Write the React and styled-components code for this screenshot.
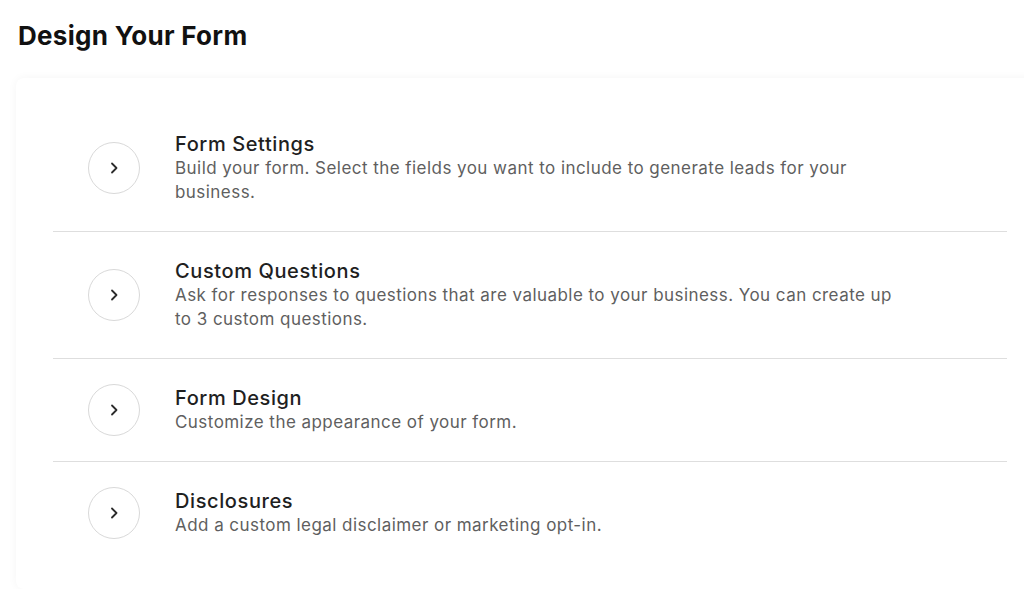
import React from "react";
import styled, { createGlobalStyle } from "styled-components";

const GlobalStyle = createGlobalStyle`
    body {
        margin: 0;
        background: #ffffff;
        font-family: Inter, "Liberation Sans", sans-serif;
        overflow: hidden;
    }
`;

const sections = [
    {
        title: "Form Settings",
        text: "Build your form. Select the fields you want to include to generate leads for your business.",
    },
    {
        title: "Custom Questions",
        text: "Ask for responses to questions that are valuable to your business. You can create up to 3 custom questions.",
    },
    {
        title: "Form Design",
        text: "Customize the appearance of your form.",
    },
    {
        title: "Disclosures",
        text: "Add a custom legal disclaimer or marketing opt-in.",
    },
];

const App = () => {
    return (
        <Page>
            <GlobalStyle />
            <Heading>Design Your Form</Heading>
            <Card>
                {sections.map((s, i) => (
                    <Row key={s.title} last={i === sections.length - 1}>
                        <CircleButton aria-label={s.title}>
                            <svg width="14" height="14" viewBox="0 0 14 14" fill="none">
                                <path
                                    d="M5 2.5 L9.5 7 L5 11.5"
                                    stroke="#2b2b2b"
                                    strokeWidth="1.8"
                                    strokeLinecap="round"
                                    strokeLinejoin="round"
                                />
                            </svg>
                        </CircleButton>
                        <Text>
                            <h3>{s.title}</h3>
                            <p>{s.text}</p>
                        </Text>
                    </Row>
                ))}
            </Card>
        </Page>
    );
};

const Page = styled.div`
    padding: 20px 0 0 16px;
`;

const Heading = styled.h1`
    margin: 0 0 0 2px;
    font-size: 26px;
    line-height: 32px;
    font-weight: 700;
    color: #111111;
    letter-spacing: 0.3px;
`;

const Card = styled.div`
    margin-top: 26px;
    width: 1028px;
    box-sizing: border-box;
    padding: 27px 37px 25px;
    background: #ffffff;
    border-radius: 8px;
    box-shadow: 0 0 10px rgba(0, 0, 0, 0.045);
`;

const Row = styled.div`
    display: flex;
    align-items: center;
    gap: 35px;
    padding: 25px 0 25px 35px;
    border-bottom: ${(p) => (p.last ? "none" : "1.5px solid #dedede")};
`;

const CircleButton = styled.button`
    flex: none;
    width: 52px;
    height: 52px;
    border-radius: 50%;
    border: 1.5px solid #d9d9d9;
    background: #ffffff;
    display: flex;
    align-items: center;
    justify-content: center;
    padding: 0;
    cursor: pointer;
`;

const Text = styled.div`
    max-width: 725px;
    padding: 2px 0;
    h3 {
        margin: 0;
        font-size: 20px;
        line-height: 24px;
        font-weight: 500;
        color: #1f1f1f;
        letter-spacing: 0.6px;
    }
    p {
        margin: 0;
        font-size: 17px;
        line-height: 24px;
        color: #5f5f5f;
        letter-spacing: 0.45px;
    }
`;

export default App;
